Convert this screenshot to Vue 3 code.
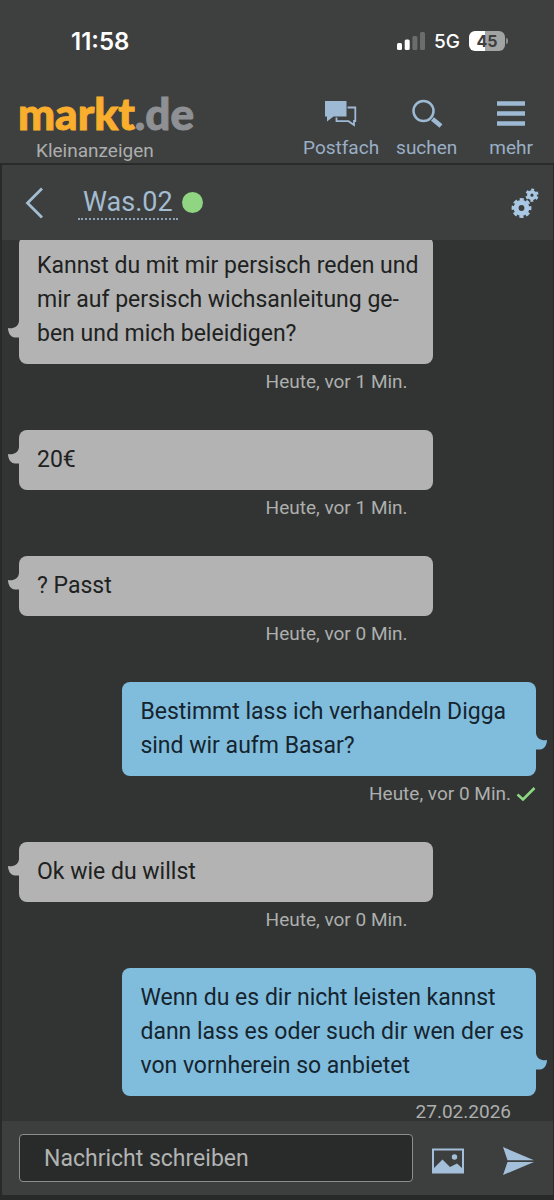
<script setup>
import { ref } from 'vue'

const draft = ref('')

const messages = [
  { text: 'Kannst du mit mir persisch reden und mir auf persisch wichsanleitung ge\u00ADben und mich beleidigen?', time: 'Heute, vor 1 Min.' },
  { text: '20€', time: 'Heute, vor 1 Min.' },
  { text: '? Passt', time: 'Heute, vor 0 Min.' },
  { text: 'Bestimmt lass ich verhandeln Digga sind wir aufm Basar?', time: 'Heute, vor 0 Min.', own: true, read: true },
  { text: 'Ok wie du willst', time: 'Heute, vor 0 Min.' },
  { text: 'Wenn du es dir nicht leisten kannst dann lass es oder such dir wen der es von vornherein so anbietet', time: '27.02.2026', own: true },
]
</script>

<template>
  <div class="app">
    <header class="top">
      <div class="status">
        <span class="clock">11:58</span>
        <div class="signals">
          <svg class="bars" width="28" height="18" viewBox="0 0 28 18" aria-hidden="true">
            <rect x="0" y="11" width="5" height="7" rx="1.5" fill="#fff" />
            <rect x="7.7" y="7.5" width="5" height="10.5" rx="1.5" fill="#fff" />
            <rect x="15.4" y="4" width="5" height="14" rx="1.5" fill="#6b6d6c" />
            <rect x="23" y="0" width="5" height="18" rx="1.5" fill="#6b6d6c" />
          </svg>
          <span class="network">5G</span>
          <div class="battery"><span class="level">45</span></div>
        </div>
      </div>
      <div class="bar">
        <a class="brand" href="#">
          <span class="logo">markt<span class="tld">.de</span></span>
          <span class="claim">Kleinanzeigen</span>
        </a>
        <nav class="nav">
          <a class="nav-item" href="#">
            <svg width="32" height="28" viewBox="0 0 32 28" aria-hidden="true">
              <path d="M0 1H21.5V16.5H8.5L2 21.5V16.5H0Z" fill="#9db9d4" />
              <path d="M22.5 7.5H30.3V21H29V25L23.5 21.2H11.5V17.5" fill="none" stroke="#9db9d4" stroke-width="1.8" />
            </svg>
            <span>Postfach</span>
          </a>
          <a class="nav-item" href="#">
            <svg width="32" height="30" viewBox="0 0 32 30" aria-hidden="true">
              <circle cx="12.5" cy="12" r="10" fill="none" stroke="#9db9d4" stroke-width="2.5" />
              <path d="M21.5 20L30 27" stroke="#9db9d4" stroke-width="4.6" />
            </svg>
            <span>suchen</span>
          </a>
          <a class="nav-item more" href="#">
            <svg width="30" height="28" viewBox="0 0 30 28" aria-hidden="true">
              <path d="M1 3.5H29M1 13.5H29M1 23.5H29" stroke="#9db9d4" stroke-width="4.5" />
            </svg>
            <span>mehr</span>
          </a>
        </nav>
      </div>
    </header>

    <main class="chat">
      <div class="chat-head">
        <button class="icon-button" type="button" aria-label="Zurück">
          <svg width="20" height="32" viewBox="0 0 20 32" aria-hidden="true">
            <path d="M18 1.5L3.5 16L18 30.5" fill="none" stroke="#a3bcd2" stroke-width="2.8" />
          </svg>
        </button>
        <a class="partner" href="#">Was.02</a>
        <span class="online"></span>
        <button class="icon-button settings" type="button" aria-label="Einstellungen">
          <svg width="28" height="30" viewBox="0 0 28 30" aria-hidden="true">
            <g fill="none" stroke="#a9c8e4">
              <circle cx="10.5" cy="20" r="5.4" stroke-width="5" />
              <circle cx="10.5" cy="20" r="8.6" stroke-width="2.6" stroke-dasharray="4.1 2.654" stroke-dashoffset="2.05" />
              <circle cx="21" cy="7.2" r="3.3" stroke-width="3.4" />
              <circle cx="21" cy="7.2" r="5.5" stroke-width="2.2" stroke-dasharray="2.9 2.86" stroke-dashoffset="-1.4" />
            </g>
          </svg>
        </button>
      </div>

      <div class="stream">
        <ul class="list">
          <li v-for="(m, i) in messages" :key="i" class="message" :class="{ own: m.own }">
            <div class="bubble">
              {{ m.text }}
              <svg class="tail" width="12" height="18" viewBox="0 0 12 18" aria-hidden="true">
                <path d="M0 8C5 9 10.5 7 11 1H12V17.5H7C3 17.5 0 13 0 8Z" fill="currentColor" />
              </svg>
            </div>
            <div class="meta">
              <span>{{ m.time }}</span>
              <span class="state">
                <svg v-if="m.read" width="20" height="16" viewBox="0 0 20 16" role="img" aria-label="Gelesen">
                  <path d="M1.5 8.5L7 13.5L18.5 2" fill="none" stroke="#8fd882" stroke-width="2.5" />
                </svg>
              </span>
            </div>
          </li>
        </ul>
      </div>

      <form class="composer" @submit.prevent>
        <input v-model="draft" class="field" type="text" placeholder="Nachricht schreiben" aria-label="Nachricht schreiben" />
        <div class="actions">
          <button class="icon-button" type="button" aria-label="Bild anhängen">
            <svg width="32" height="26" viewBox="0 0 32 26" aria-hidden="true">
              <rect x="1" y="1.5" width="30" height="23" fill="none" stroke="#a3bfda" stroke-width="2" />
              <path d="M2 20L10.5 11.5L18 19L25 15.5L30 20V24H2Z" fill="#a3bfda" />
              <circle cx="22.5" cy="9" r="2.7" fill="#a3bfda" />
            </svg>
          </button>
          <button class="icon-button" type="submit" aria-label="Senden">
            <svg width="32" height="30" viewBox="0 0 32 30" aria-hidden="true">
              <path d="M0 1L31 14.2H4.5ZM4.5 16H31L0 29Z" fill="#a3bfda" />
            </svg>
          </button>
        </div>
      </form>
    </main>
  </div>
</template>

<style>
body {
  background: #282a29;
}
</style>

<style scoped>
.app {
  display: flex;
  flex-direction: column;
  height: 100vh;
  box-sizing: border-box;
  padding-bottom: 5px;
  font-family: Roboto, "Liberation Sans", sans-serif;
  background: #282a29;
}
a {
  color: inherit;
  text-decoration: none;
}
svg {
  display: block;
}
.top {
  background: #3e403f;
  border-bottom: 2px solid #292b2a;
}
.status {
  display: flex;
  justify-content: space-between;
  align-items: center;
  padding: 26px 49px 0 71px;
  height: 30px;
  color: #fff;
  font-family: Inter, sans-serif;
}
.clock {
  font-size: 24px;
  font-weight: 600;
}
.signals {
  display: flex;
  align-items: center;
}
.network {
  margin: 0 9px;
  font-size: 19px;
  font-weight: 500;
}
.battery {
  position: relative;
  width: 36px;
  height: 20px;
  border-radius: 6px;
  background: linear-gradient(90deg, #fff 45%, #a2a3a3 45%);
  text-align: center;
}
.battery::after {
  content: "";
  position: absolute;
  left: 37px;
  top: 7px;
  width: 2px;
  height: 6px;
  border-radius: 0 2px 2px 0;
  background: #8b8c8c;
}
.level {
  display: block;
  color: #3e403f;
  font-size: 16px;
  line-height: 20px;
  font-weight: 700;
}
.bar {
  display: flex;
  justify-content: space-between;
  height: 107px;
  padding: 0 21px 0 18px;
}
.brand {
  display: flex;
  flex-direction: column;
  padding-top: 33px;
}
.logo {
  color: #f9ae2d;
  font-family: Lato, sans-serif;
  font-size: 44px;
  font-weight: 900;
  line-height: 48px;
  -webkit-text-stroke: 1px currentColor;
}
.tld {
  color: #8e9094;
}
.claim {
  padding-left: 18px;
  color: #acaeae;
  font-size: 19px;
  line-height: 28px;
}
.nav {
  display: flex;
  gap: 17px;
  padding-top: 43px;
}
.nav-item {
  display: flex;
  flex-direction: column;
  align-items: center;
  color: #9aafc6;
  font-size: 19px;
  line-height: 24px;
}
.nav-item svg {
  height: 30px;
  margin-bottom: 7px;
}
.more {
  margin-left: 15px;
}
.chat {
  flex: 1;
  min-height: 0;
  display: flex;
  flex-direction: column;
  margin: 0 1px 0 2px;
  background: #323433;
}
.chat-head {
  display: flex;
  align-items: center;
  height: 75px;
  flex: none;
  padding: 0 14px 0 22px;
  background: #3d3f3e;
}
.icon-button {
  padding: 0;
  border: 0;
  background: none;
}
.settings {
  margin-left: auto;
}
.partner {
  margin: 0 4px 0 34px;
  padding: 0 5px;
  border-bottom: 2px dotted #8ba1b5;
  color: #a3bcd2;
  font-size: 27px;
  line-height: 32px;
}
.online {
  width: 21px;
  height: 21px;
  border-radius: 50%;
  background: #8fd582;
}
.stream {
  flex: 1;
  min-height: 0;
  overflow: hidden;
}
.list {
  margin: -4px 0 0;
  padding: 0 17px;
  list-style: none;
}
.message {
  display: flex;
  flex-direction: column;
  width: 80%;
}
.own {
  margin-left: auto;
}
.bubble {
  position: relative;
  padding: 13px 10px 13px 18px;
  border-radius: 8px;
  background: #b3b3b3;
  color: #202221;
  font-size: 23px;
  line-height: 34px;
}
.own .bubble {
  background: #80bddd;
  color: #15242e;
}
.tail {
  position: absolute;
  left: -11px;
  bottom: 26px;
  color: #b3b3b3;
}
.own .tail {
  left: auto;
  right: -11px;
  color: #80bddd;
  transform: scaleX(-1);
}
.meta {
  display: flex;
  justify-content: flex-end;
  align-items: center;
  height: 36px;
  margin-bottom: 30px;
  color: #adafae;
  font-size: 19px;
  line-height: 18px;
}
.message:last-child .meta {
  height: 32px;
  margin-bottom: 0;
}
.state {
  display: flex;
  justify-content: flex-end;
  width: 25px;
}
.composer {
  display: flex;
  align-items: center;
  gap: 19px;
  flex: none;
  height: 74px;
  padding: 0 18px 0 17px;
  background: #3d3f3e;
}
.actions {
  display: flex;
  align-items: center;
  gap: 39px;
  padding-top: 5px;
}
.field {
  flex: 1;
  min-width: 0;
  height: 48px;
  box-sizing: border-box;
  padding: 0 24px;
  border: 1px solid #8c8e8d;
  border-radius: 4px;
  background: #292b2a;
  color: #b5b7b6;
  font-family: inherit;
  font-size: 23px;
}
.field::placeholder {
  color: #b1b3b2;
  opacity: 1;
}
</style>
